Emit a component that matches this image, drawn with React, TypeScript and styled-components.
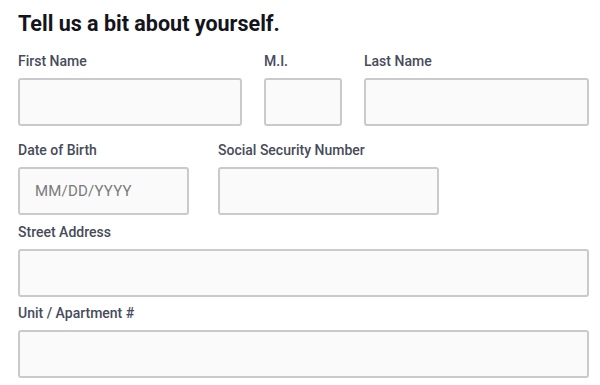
import styled, { createGlobalStyle } from "styled-components";

const GlobalStyle = createGlobalStyle`
  * {
    box-sizing: border-box;
  }
  body {
    margin: 0;
    background: #ffffff;
    font-family: Roboto, "Liberation Sans", Arial, sans-serif;
  }
`;

const Form = styled.form`
  width: 600px;
  padding: 10px 11px 0 18px;
`;

const Title = styled.h1`
  margin: 0 0 16px 0;
  font-size: 21.5px;
  line-height: 27px;
  font-weight: 700;
  color: #14141c;
`;

const Row = styled.div<{ $columns: string; $gap: number; $space: number }>`
  display: grid;
  grid-template-columns: ${({ $columns }) => $columns};
  column-gap: ${({ $gap }) => $gap}px;
  margin-bottom: ${({ $space }) => $space}px;
`;

const Field = styled.div`
  display: flex;
  flex-direction: column;
`;

const Label = styled.label`
  font-size: 14px;
  line-height: 16px;
  font-weight: 500;
  color: #474b5a;
  margin-bottom: 9px;
`;

const Input = styled.input`
  width: 100%;
  height: 48px;
  padding: 0 15px;
  border: 2px solid #cacacd;
  border-radius: 3px;
  background: #fafafa;
  font-family: Roboto, "Liberation Sans", Arial, sans-serif;
  font-size: 15px;
  color: #333;
  outline: none;

  &::placeholder {
    color: #7a7a7a;
    letter-spacing: 0.2px;
  }
`;

function App() {
  return (
    <>
      <GlobalStyle />
      <Form>
        <Title>Tell us a bit about yourself.</Title>
        <Row $columns="224px 78px 1fr" $gap={22} $space={16}>
          <Field>
            <Label>First Name</Label>
            <Input type="text" />
          </Field>
          <Field>
            <Label>M.I.</Label>
            <Input type="text" />
          </Field>
          <Field>
            <Label>Last Name</Label>
            <Input type="text" />
          </Field>
        </Row>
        <Row $columns="171px 221px" $gap={29} $space={9}>
          <Field>
            <Label>Date of Birth</Label>
            <Input type="text" placeholder="MM/DD/YYYY" />
          </Field>
          <Field>
            <Label>Social Security Number</Label>
            <Input type="text" />
          </Field>
        </Row>
        <Row $columns="1fr" $gap={0} $space={8}>
          <Field>
            <Label>Street Address</Label>
            <Input type="text" />
          </Field>
        </Row>
        <Row $columns="1fr" $gap={0} $space={0}>
          <Field>
            <Label>Unit / Apartment #</Label>
            <Input type="text" />
          </Field>
        </Row>
      </Form>
    </>
  );
}

export default App;
